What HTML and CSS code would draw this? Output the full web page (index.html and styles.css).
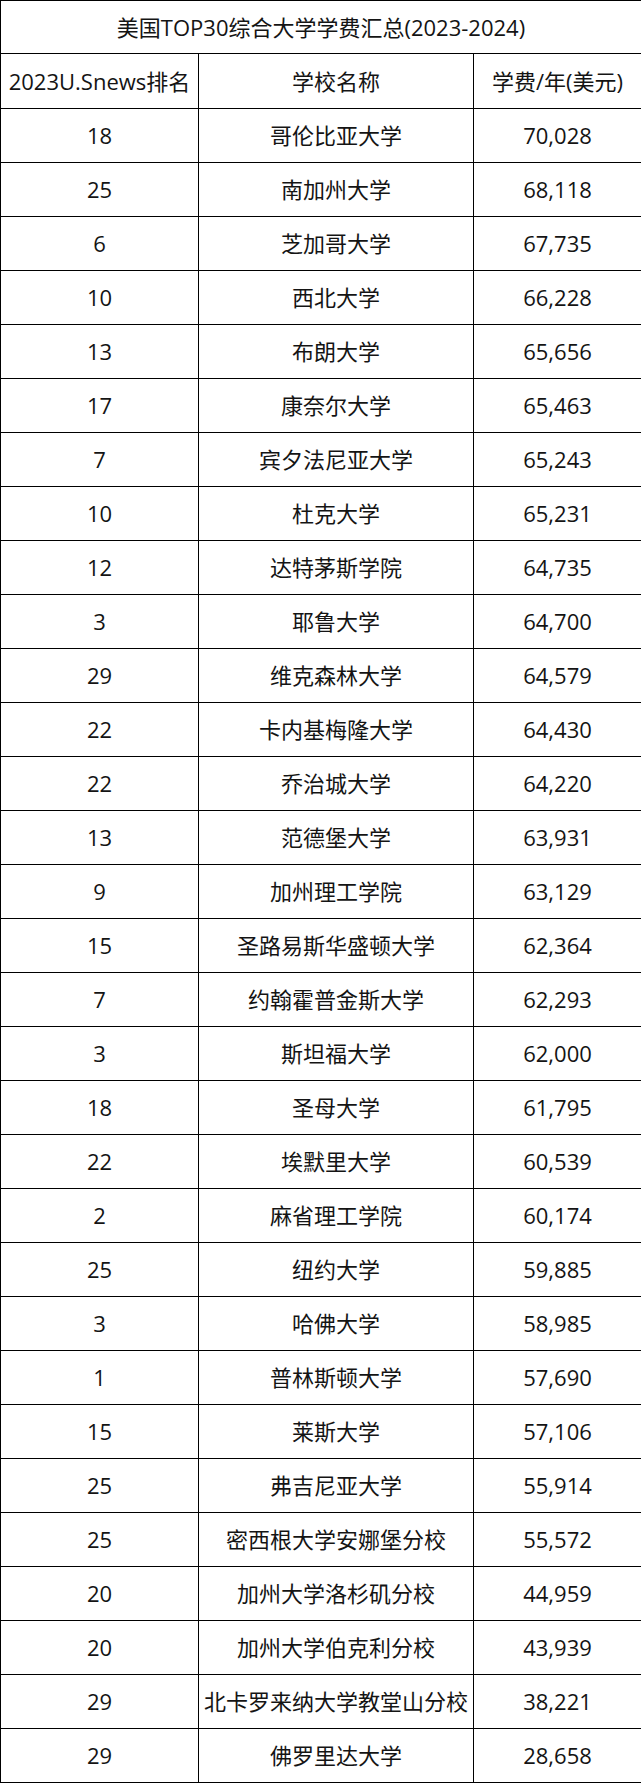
FILE: index.html
```html
<!DOCTYPE html>
<html lang="zh-CN">
<head>
<meta charset="utf-8">
<title>美国TOP30综合大学学费汇总(2023-2024)</title>
<link rel="stylesheet" href="styles.css">
</head>
<body>
<table class="fees">
  <colgroup>
    <col class="c-rank">
    <col class="c-name">
    <col class="c-fee">
  </colgroup>
  <thead>
    <tr class="title-row"><th colspan="3">美国TOP30综合大学学费汇总(2023-2024)</th></tr>
    <tr class="head-row"><th>2023U.Snews排名</th><th>学校名称</th><th>学费/年(美元)</th></tr>
  </thead>
  <tbody>
    <tr><td>18</td><td>哥伦比亚大学</td><td>70,028</td></tr>
    <tr><td>25</td><td>南加州大学</td><td>68,118</td></tr>
    <tr><td>6</td><td>芝加哥大学</td><td>67,735</td></tr>
    <tr><td>10</td><td>西北大学</td><td>66,228</td></tr>
    <tr><td>13</td><td>布朗大学</td><td>65,656</td></tr>
    <tr><td>17</td><td>康奈尔大学</td><td>65,463</td></tr>
    <tr><td>7</td><td>宾夕法尼亚大学</td><td>65,243</td></tr>
    <tr><td>10</td><td>杜克大学</td><td>65,231</td></tr>
    <tr><td>12</td><td>达特茅斯学院</td><td>64,735</td></tr>
    <tr><td>3</td><td>耶鲁大学</td><td>64,700</td></tr>
    <tr><td>29</td><td>维克森林大学</td><td>64,579</td></tr>
    <tr><td>22</td><td>卡内基梅隆大学</td><td>64,430</td></tr>
    <tr><td>22</td><td>乔治城大学</td><td>64,220</td></tr>
    <tr><td>13</td><td>范德堡大学</td><td>63,931</td></tr>
    <tr><td>9</td><td>加州理工学院</td><td>63,129</td></tr>
    <tr><td>15</td><td>圣路易斯华盛顿大学</td><td>62,364</td></tr>
    <tr><td>7</td><td>约翰霍普金斯大学</td><td>62,293</td></tr>
    <tr><td>3</td><td>斯坦福大学</td><td>62,000</td></tr>
    <tr><td>18</td><td>圣母大学</td><td>61,795</td></tr>
    <tr><td>22</td><td>埃默里大学</td><td>60,539</td></tr>
    <tr><td>2</td><td>麻省理工学院</td><td>60,174</td></tr>
    <tr><td>25</td><td>纽约大学</td><td>59,885</td></tr>
    <tr><td>3</td><td>哈佛大学</td><td>58,985</td></tr>
    <tr><td>1</td><td>普林斯顿大学</td><td>57,690</td></tr>
    <tr><td>15</td><td>莱斯大学</td><td>57,106</td></tr>
    <tr><td>25</td><td>弗吉尼亚大学</td><td>55,914</td></tr>
    <tr><td>25</td><td>密西根大学安娜堡分校</td><td>55,572</td></tr>
    <tr><td>20</td><td>加州大学洛杉矶分校</td><td>44,959</td></tr>
    <tr><td>20</td><td>加州大学伯克利分校</td><td>43,939</td></tr>
    <tr><td>29</td><td>北卡罗来纳大学教堂山分校</td><td>38,221</td></tr>
    <tr><td>29</td><td>佛罗里达大学</td><td>28,658</td></tr>
  </tbody>
</table>
</body>
</html>
```

FILE: styles.css
```css
html, body {
  margin: 0;
  padding: 0;
  background: #fff;
}

.fees {
  border-collapse: collapse;
  table-layout: fixed;
  width: 641px;
  font-family: "Open Sans", "Noto Sans CJK SC", sans-serif;
  font-size: 22px;
  color: #141414;
}

.c-rank { width: 198px; }
.c-name { width: 275px; }
.c-fee { width: 168px; }

.fees th,
.fees td {
  border: 1px solid #000;
  text-align: center;
  vertical-align: middle;
  font-weight: normal;
  padding: 0;
  white-space: nowrap;
  overflow: hidden;
  line-height: 1.2;
}

.title-row th { height: 52px; }
.head-row th { height: 54px; }
.fees tbody td { height: 53px; }
```
